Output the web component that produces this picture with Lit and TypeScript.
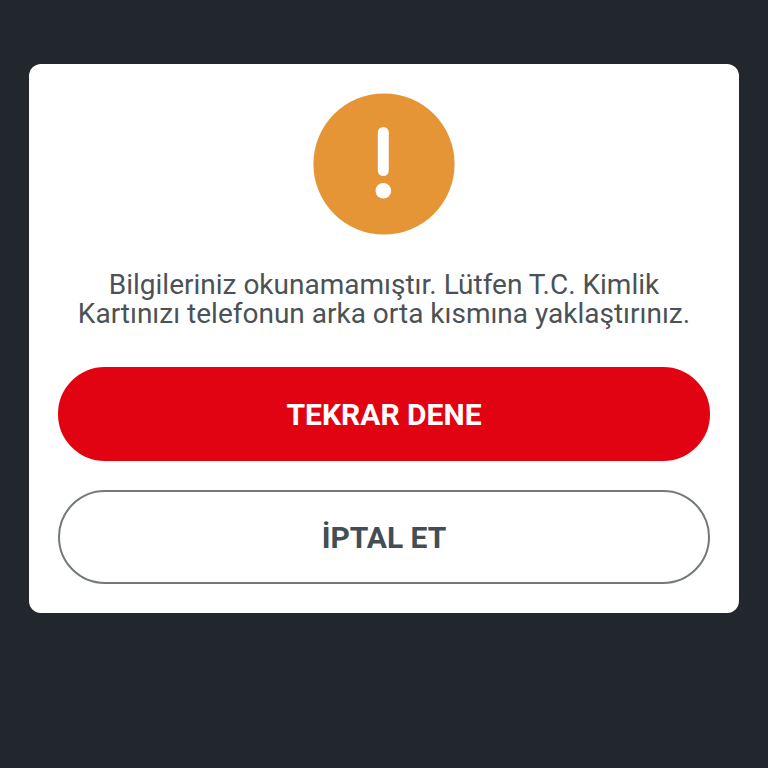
import { LitElement, html, css } from "lit";
import { customElement } from "lit/decorators.js";

@customElement("app-root")
export class AppRoot extends LitElement {
  static styles = css`
    :host {
      display: block;
      box-sizing: border-box;
      min-height: 100vh;
      padding: 64px 29px;
      background: #22272e;
      font-family: Roboto, "Open Sans", sans-serif;
      color: #4b5255;
    }
    .dialog {
      box-sizing: border-box;
      display: flex;
      flex-direction: column;
      align-items: center;
      padding: 29px;
      border-radius: 12px;
      background: #fff;
    }
    .icon {
      display: block;
      width: 142px;
      height: 142px;
    }
    .message {
      margin: 35px 0 39px;
      font-size: 28px;
      font-weight: 400;
      line-height: 29px;
      text-align: center;
    }
    .actions {
      align-self: stretch;
      display: flex;
      flex-direction: column;
      gap: 29px;
    }
    .button {
      box-sizing: border-box;
      width: 100%;
      height: 94px;
      border: 2px solid #73797b;
      border-radius: 47px;
      background: #fff;
      color: #434e54;
      font: inherit;
      font-size: 30px;
      font-weight: 700;
      cursor: pointer;
    }
    .primary {
      border-color: #e10311;
      background: #e10311;
      color: #fff;
    }
  `;

  render() {
    return html`
      <main class="dialog" role="alertdialog" aria-labelledby="message">
        <svg class="icon" viewBox="0 0 142 142" aria-hidden="true">
          <circle cx="71" cy="71" r="70.6" fill="#e59535" />
          <path d="M70.3 39.5V77.5" stroke="#fff" stroke-width="11" stroke-linecap="round" />
          <circle cx="70.3" cy="97.7" r="7.8" fill="#fff" />
        </svg>
        <p class="message" id="message">
          Bilgileriniz okunamamıştır. Lütfen T.C. Kimlik<br />Kartınızı telefonun arka orta kısmına yaklaştırınız.
        </p>
        <div class="actions">
          <button class="button primary" type="button">TEKRAR DENE</button>
          <button class="button" type="button">İPTAL ET</button>
        </div>
      </main>
    `;
  }
}
